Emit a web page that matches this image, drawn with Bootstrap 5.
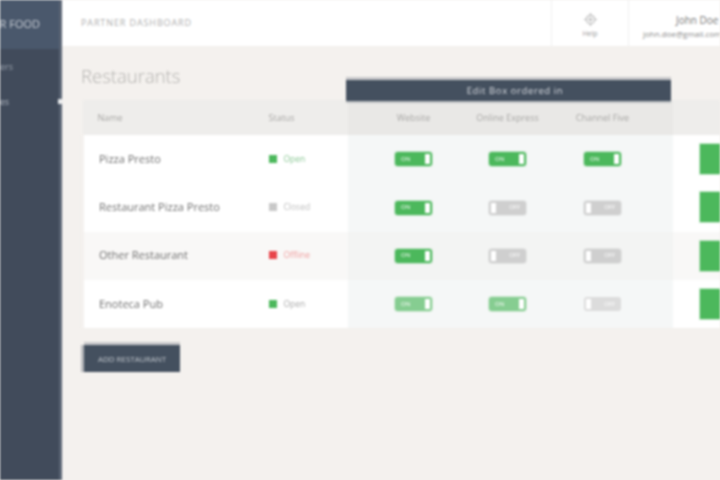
<!DOCTYPE html>
<html lang="en">
<head>
  <meta charset="UTF-8" />
  <meta name="viewport" content="width=device-width, initial-scale=1.0" />
  <title>Partner dashboard</title>
  <link rel="stylesheet" href="https://cdn.jsdelivr.net/npm/bootstrap@5.3.0/dist/css/bootstrap.min.css">
  <script src="https://cdn.jsdelivr.net/npm/bootstrap@5.3.0/dist/js/bootstrap.bundle.min.js"></script>
  <style>
    html, body { height: 100%; overflow: hidden; }
    body { background: #f4f1ee; font-family: "Open Sans", "Liberation Sans", sans-serif; color: #555; }
    .app-shell { width: 720px; height: 480px; overflow: hidden; filter: blur(.9px); }
    .side-bar { width: 62px; flex: none; background: #414b5b; border-right: 3px solid #5a6474; }
    .side-brand { height: 49px; background: #4a586c; color: #c9ced5; font-size: 11px; padding-right: 19px; white-space: nowrap; }
    .side-item { height: 35px; padding-right: 46px; color: #9aa2ad; font-size: 9px; white-space: nowrap; position: relative; }
    .side-item.current { padding-right: 50px; color: #b4bac3; }
    .side-item.current::after { content: ""; position: absolute; right: -3px; top: 15px; width: 4px; height: 5px; background: #e8eaec; }
    .top-bar { height: 46px; background: #fff; }
    .top-title { font-size: 9px; letter-spacing: .9px; color: #aeaeae; padding-left: 19px; }
    .top-cell { border-left: 1px solid #efefef; height: 46px; }
    .help-cell { width: 77px; font-size: 7px; color: #999; padding-top: 5px; gap: 2px; }
    .user-cell { width: 92px; padding: 6px 0 0 14px; white-space: nowrap; overflow: hidden; gap: 3px; }
    .user-name { font-size: 10px; color: #777; padding-left: 33px; line-height: 12px; }
    .user-mail { font-size: 8px; color: #888; line-height: 10px; }
    .page-body { padding: 17px 0 0 19px; position: relative; }
    .page-heading { font-size: 18.5px; font-weight: 300; color: #b3b2af; margin: 0; line-height: 25px; height: 37px; }
    .table-wrap { position: relative; width: 700px; }
    .bulk-bar { position: absolute; left: 265px; top: -20px; width: 325px; height: 21px; background: #44505f; color: #d8dbe0; font-size: 9.5px; letter-spacing: .6px; text-align: center; padding-left: 13px; line-height: 21px; box-shadow: 0 -3px 0 rgba(68,80,95,.25), 0 2px 0 rgba(68,80,95,.25); z-index: 2; }
    .rest-table { table-layout: fixed; width: 700px; margin: 0; border-collapse: collapse; font-size: 9px; }
    .rest-table th, .rest-table td { border: 0; padding: 0; vertical-align: middle; background: #fff; box-shadow: none; color: #666; }
    .rest-table th { height: 35px; background: #eeedeb; font-weight: 400; font-size: 9px; color: #a8a7a5; }
    .rest-table tbody tr { height: 48.25px; }
    .rest-table tbody tr.stripe td { background: #f9f8f7; }
    .rest-table th.bulk-col { background: #e9e8e6; text-align: center; }
    .rest-table td.bulk-col { background: #f5f7f7; text-align: center; }
    .rest-table tr.stripe td.bulk-col { background: #f3f4f3; }
    .rest-table .first-bulk { padding-left: 19px; }
    .rest-table .name-col { padding-left: 15px; }
    .rest-table td.name-col { font-size: 11px; color: #6f6f6f; border-left: 3px solid #f4f1ee; }
    .state-dot { display: inline-block; width: 8px; height: 8px; margin-right: 7px; vertical-align: -1px; background: var(--dot); }
    .rest-table td.state-open { --dot: #4cb85c; color: #8cc896; font-size: 8.5px; }
    .rest-table td.state-closed { --dot: #c8c8c8; color: #bdbdbd; font-size: 8.5px; }
    .rest-table td.state-off { --dot: #e8444a; color: #f0a0a0; font-size: 8.5px; }
    .rest-table td.state-plain { --dot: #4cb85c; color: #aaa; font-size: 8.5px; }
    .switch-pill { display: inline-flex; align-items: center; width: 37px; height: 14px; border-radius: 3px; font-size: 6px; color: #fff; padding: 0 2px 0 6px; justify-content: space-between; vertical-align: middle; }
    .switch-pill i { width: 5px; height: 10px; background: #fff; display: block; }
    .pill-on { background: #4cb85c; box-shadow: 0 0 0 1px rgba(76,184,92,.25); }
    .pill-soft { background: #86cd91; box-shadow: 0 0 0 1px rgba(76,184,92,.2); }
    .pill-off { background: #cfcfcf; flex-direction: row-reverse; padding: 0 6px 0 2px; box-shadow: 0 0 0 1px rgba(200,200,200,.3); }
    .pill-soft-off { background: #dcdcdc; flex-direction: row-reverse; padding: 0 6px 0 2px; }
    .go-btn { display: block; width: 60px; height: 30px; background: #4cb85c; margin-left: 27px; border-radius: 0; border: 0; padding: 0; box-shadow: 0 0 0 1px rgba(76,184,92,.3); }
    .add-btn { display: block; margin: 17px 0 0 3px; width: 96px; height: 27px; background: #44505f; color: #c3c8ce; font-size: 8px; border: 0; border-radius: 0; padding: 0; box-shadow: 0 -3px 0 rgba(68,80,95,.25), -3px 0 0 rgba(68,80,95,.35); }
    .add-btn:hover { background: #44505f; color: #c3c8ce; }
  </style>
</head>
<body>
  <div class="app-shell d-flex">
    <!-- SIDEBAR -->
    <aside class="side-bar">
      <div class="side-brand d-flex align-items-center justify-content-end">PARTNER FOOD</div>
      <div class="side-item d-flex align-items-center justify-content-end">Orders</div>
      <div class="side-item current d-flex align-items-center justify-content-end">Venues</div>
    </aside>

    <div class="flex-grow-1 overflow-hidden">
      <!-- TOP BAR -->
      <header class="top-bar d-flex align-items-center">
        <div class="top-title flex-grow-1">PARTNER DASHBOARD</div>
        <div class="top-cell help-cell d-flex flex-column align-items-center justify-content-center">
          <svg width="15" height="15" viewBox="0 0 16 16" fill="none" stroke="#bbb" stroke-width="1.3"><circle cx="8" cy="8" r="4.5"/><circle cx="8" cy="8" r="1.5"/><path d="M8 1v2.5M8 12.5V15M1 8h2.5M12.5 8H15"/></svg>
          <span>Help</span>
        </div>
        <div class="top-cell user-cell d-flex flex-column justify-content-center">
          <div class="user-name">John Doe</div>
          <div class="user-mail">john.doe@gmail.com</div>
        </div>
      </header>

      <!-- CONTENT -->
      <main class="page-body">
        <h1 class="page-heading">Restaurants</h1>
        <div class="table-wrap">
          <div class="bulk-bar">Edit Box ordered in</div>
          <table class="table rest-table">
            <colgroup>
              <col style="width:186px"><col style="width:79px"><col style="width:113px"><col style="width:94px"><col style="width:96px"><col style="width:22px"><col style="width:110px">
            </colgroup>
            <thead>
              <tr>
                <th class="name-col">Name</th><th>Status</th>
                <th class="bulk-col first-bulk">Website</th><th class="bulk-col">Online Express</th><th class="bulk-col">Channel Five</th>
                <th class="bulk-col"></th><th></th>
              </tr>
            </thead>
            <tbody>
              <tr>
                <td class="name-col">Pizza Presto</td>
                <td class="state-open"><span class="state-dot"></span>Open</td>
                <td class="bulk-col first-bulk"><span class="switch-pill pill-on">ON<i></i></span></td>
                <td class="bulk-col"><span class="switch-pill pill-on">ON<i></i></span></td>
                <td class="bulk-col"><span class="switch-pill pill-on">ON<i></i></span></td>
                <td class="bulk-col"></td>
                <td><button class="btn go-btn" type="button" aria-label="Edit"></button></td>
              </tr>
              <tr>
                <td class="name-col">Restaurant Pizza Presto</td>
                <td class="state-closed"><span class="state-dot"></span>Closed</td>
                <td class="bulk-col first-bulk"><span class="switch-pill pill-on">ON<i></i></span></td>
                <td class="bulk-col"><span class="switch-pill pill-off">OFF<i></i></span></td>
                <td class="bulk-col"><span class="switch-pill pill-off">OFF<i></i></span></td>
                <td class="bulk-col"></td>
                <td><button class="btn go-btn" type="button" aria-label="Edit"></button></td>
              </tr>
              <tr class="stripe">
                <td class="name-col">Other Restaurant</td>
                <td class="state-off"><span class="state-dot"></span>Offline</td>
                <td class="bulk-col first-bulk"><span class="switch-pill pill-on">ON<i></i></span></td>
                <td class="bulk-col"><span class="switch-pill pill-off">OFF<i></i></span></td>
                <td class="bulk-col"><span class="switch-pill pill-off">OFF<i></i></span></td>
                <td class="bulk-col"></td>
                <td><button class="btn go-btn" type="button" aria-label="Edit"></button></td>
              </tr>
              <tr>
                <td class="name-col">Enoteca Pub</td>
                <td class="state-plain"><span class="state-dot"></span>Open</td>
                <td class="bulk-col first-bulk"><span class="switch-pill pill-soft">ON<i></i></span></td>
                <td class="bulk-col"><span class="switch-pill pill-soft">ON<i></i></span></td>
                <td class="bulk-col"><span class="switch-pill pill-soft-off">OFF<i></i></span></td>
                <td class="bulk-col"></td>
                <td><button class="btn go-btn" type="button" aria-label="Edit"></button></td>
              </tr>
            </tbody>
          </table>
        </div>
        <button class="btn add-btn" type="button">ADD RESTAURANT</button>
      </main>
    </div>
  </div>
</body>
</html>
